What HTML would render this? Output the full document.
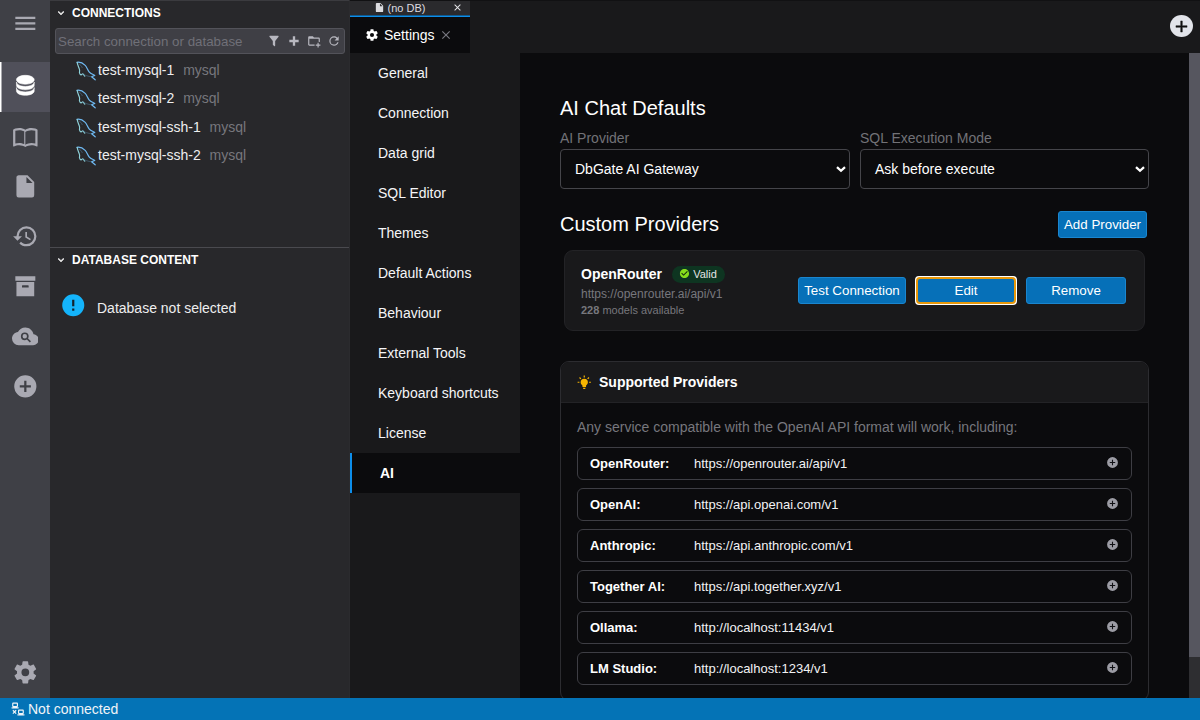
<!DOCTYPE html>
<html lang="en">
<head>
<meta charset="utf-8">
<title>DbGate - Settings</title>
<style>
*{box-sizing:border-box}
html,body{margin:0;padding:0;width:1200px;height:720px;overflow:hidden;background:#0b0b0d}
body{font-family:"Liberation Sans",Arial,sans-serif;font-size:14px;color:#e8e8ea;position:relative}
svg{display:block}
.abs{position:absolute}

/* icon bar */
#iconbar{position:absolute;left:0;top:0;width:50px;height:698px;background:#3f4046}
#iconbar .it{position:absolute;left:0;width:50px;height:50px}
#iconbar .it svg{position:absolute;left:11.67px;top:10.67px;width:26.67px;height:26.67px;fill:#a9a9b2}
#iconbar .it.act{background:linear-gradient(90deg,#fff 0,#fff 1px,#a8a8ad 1px,#a8a8ad 2px,#50505a 2px)}
#iconbar .it.act svg{fill:#fff;stroke:#fff;stroke-width:.5;left:12px;top:10.3px}

/* left panel */
#left{position:absolute;left:50px;top:0;width:300px;height:698px;background:#28282b;box-shadow:inset 0 1px 0 #3b3b3f}
.wtitle{position:absolute;left:0;width:299px;height:24px;font-weight:bold;font-size:12px;color:#fff;line-height:26px}
.wtitle svg{position:absolute;left:5px;top:6.5px;width:12px;height:12px;fill:#f0f0f0;stroke:#f0f0f0;stroke-width:1}
.wtitle span{position:absolute;left:22px;top:0}
#search{position:absolute;left:5px;top:28px;width:290px;height:26px;background:#3f3f45;border:1px solid #53535a;border-radius:3px}
#search .ph{position:absolute;left:2px;top:1px;line-height:24px;font-size:13.33px;color:#707078;white-space:nowrap}
#search svg{position:absolute;top:5px;width:14px;height:14px;fill:#b8b8c0}
.conn{position:absolute;left:0;width:299px;height:28px;line-height:28px;white-space:nowrap}
.conn svg{position:absolute;left:10.5px;top:-0.6px;width:40px;height:30px}
.conn .n{position:absolute;left:48px;color:#eeeeef}
.conn .e{color:#77777d;margin-left:5px}
#split{position:absolute;left:0;top:246.5px;width:299px;height:1px;background:#4a4a4f}

/* status bar */
#status{position:absolute;left:0;top:698px;width:1200px;height:22px;background:#0473b6;color:#f0f4f8;line-height:22px}
#status svg{position:absolute;left:10.5px;top:4px;width:14px;height:14px;fill:#f0f4f8}
#status span{position:absolute;left:28px;top:0}

/* tabs */
#tabbar{position:absolute;left:350px;top:0;width:850px;height:53px;background:#19191b;border-top:1px solid #111113}
#vsplit{position:absolute;left:349px;top:0;width:1px;height:698px;background:#2b2b2e}
#tabgrp{position:absolute;left:0;top:0;width:120px;height:14px;background:#2a2a2d;font-size:11px;line-height:14px;color:#dcdce0}
#tabgrp:after{content:"";position:absolute;left:0;top:14px;width:120px;height:2px;background:linear-gradient(#125a8e 0,#125a8e 1px,#0d8eea 1px)}
#tab{position:absolute;left:0;top:16px;width:120px;height:36px;background:#0b0b0d;line-height:36px;color:#fff}
#newtab{position:absolute;left:820px;top:14px;width:23px;height:22px;border-radius:50%;background:#e2e4ea}

/* settings menu */
#menu{position:absolute;left:350px;top:53px;width:170px;height:645px;background:#19191b}
#menu .mi{position:absolute;left:0;width:170px;height:40px;line-height:40px;padding-left:28px;color:#f5f5f7;white-space:nowrap}
#menu .mi.act{background:#0b0b0d;border-left:2px solid #0d8eea;font-weight:bold;color:#fff}

/* content */
#content{position:absolute;left:520px;top:53px;width:669px;height:645px;background:#0b0b0d;overflow:hidden}
#sbar{position:absolute;left:1189px;top:53px;width:11px;height:645px;background:#2e2e31}
#sbar i{position:absolute;left:0;top:0;width:11px;height:604px;background:#56565f}
h2{position:absolute;margin:0;font-weight:normal;font-size:20px;color:#fff;white-space:nowrap;line-height:24px}
.lbl{position:absolute;color:#727277;white-space:nowrap;line-height:16px}
.sel{position:absolute;height:40px;border:1px solid #45454a;border-radius:4px;background:#0b0b0d;color:#fff;line-height:38px;padding-left:14px;white-space:nowrap}
.sel svg{position:absolute;right:2px;top:13.4px;width:12px;height:12px;fill:none;stroke:#fff;stroke-width:2.3}
#edit{outline:#e8980a auto 1px}
.btn{position:absolute;height:27px;background:#0670b8;border:1px solid #1a86cf;border-radius:3px;color:#fff;font-size:13.33px;line-height:25px;text-align:center;white-space:nowrap}

.card{position:absolute;left:44px;top:197px;width:581px;height:81px;background:#19191b;border:1px solid #232326;border-radius:9px}
.card .t{position:absolute;left:16px;top:15px;font-weight:bold;font-size:14px;line-height:16px;color:#fff}
.card .u{position:absolute;left:16px;top:36px;font-size:12px;line-height:14px;color:#77777d;white-space:nowrap}
.card .m{position:absolute;left:16px;top:53px;font-size:11px;line-height:13px;color:#77777d;white-space:nowrap}
.badge{position:absolute;left:107px;top:15px;width:53px;height:17px;border-radius:9px;background:#0e3521;font-size:11px;line-height:17px;color:#e4e4e6}
.badge svg{position:absolute;left:7px;top:2.3px;width:11px;height:11px;fill:#86dd1c}
.badge span{position:absolute;left:21.2px;top:0}
.sup{position:absolute;left:40px;top:308px;width:589px;height:340px;border:1px solid #2c2c30;border-radius:9px;background:#0b0b0d;overflow:hidden}
.sup .hd{position:absolute;left:0;top:0;width:587px;height:41px;background:#19191b;border-bottom:1px solid #232326;font-weight:bold;font-size:14px;line-height:40px;color:#fff}
.sup .hd svg{position:absolute;left:15.75px;top:12.6px;width:14.5px;height:14.5px;fill:#f7b500}
.sup .hd span{position:absolute;left:38px;top:0;white-space:nowrap}
.sup .ds{position:absolute;left:16px;top:57px;line-height:16px;color:#77777d;white-space:nowrap}
.row{position:absolute;left:16px;width:555px;height:33px;border:1px solid #3e3e44;border-radius:6px;font-size:13px;line-height:31px;color:#f2f2f4;white-space:nowrap}
.row b{position:absolute;left:12px;top:0;color:#fff}
.row span{position:absolute;left:116px;top:0}
.row svg{position:absolute;left:528px;top:8.4px;width:13px;height:13px;fill:#9c9ca4}
</style>
</head>
<body>

<div id="iconbar">
  <div class="it" style="top:0"><svg viewBox="0 0 24 24" style="top:10.2px"><path d="M3,6H21V8H3V6M3,11H21V13H3V11M3,16H21V18H3V16Z"/></svg></div>
  <div class="it act" style="top:62px"><svg viewBox="0 0 24 24"><path d="M12,3C7.58,3 4,4.79 4,7C4,9.21 7.58,11 12,11C16.42,11 20,9.21 20,7C20,4.79 16.42,3 12,3M4,9V12C4,14.21 7.58,16 12,16C16.42,16 20,14.21 20,12V9C20,11.21 16.42,13 12,13C7.58,13 4,11.21 4,9M4,14V17C4,19.21 7.58,21 12,21C16.42,21 20,19.21 20,17V14C20,16.21 16.42,18 12,18C7.58,18 4,16.21 4,14Z"/></svg></div>
  <div class="it" style="top:112px"><svg viewBox="0 0 24 24"><path d="M12 21.5C10.65 20.65 8.2 20 6.5 20C4.85 20 3.15 20.3 1.75 21.05C1.65 21.1 1.6 21.1 1.5 21.1C1.25 21.1 1 20.85 1 20.6V6C1.6 5.55 2.25 5.25 3 5C4.11 4.65 5.33 4.5 6.5 4.5C8.45 4.5 10.55 4.9 12 6C13.45 4.9 15.55 4.5 17.5 4.5C18.67 4.5 19.89 4.65 21 5C21.75 5.25 22.4 5.55 23 6V20.6C23 20.85 22.75 21.1 22.5 21.1C22.4 21.1 22.35 21.1 22.25 21.05C20.85 20.3 19.15 20 17.5 20C15.8 20 13.35 20.65 12 21.5M12 8V19.5C13.35 18.65 15.8 18 17.5 18C18.7 18 19.9 18.15 21 18.5V7C19.9 6.65 18.7 6.5 17.5 6.5C15.8 6.5 13.35 7.15 12 8M11 7.5C9.64 6.9 7.84 6.5 6.5 6.5C5.3 6.5 4.1 6.65 3 7V18.5C4.1 18.15 5.3 18 6.5 18C7.84 18 9.64 18.4 11 19V7.5Z"/></svg></div>
  <div class="it" style="top:162px"><svg viewBox="0 0 24 24"><path d="M13,9V3.5L18.5,9M6,2C4.89,2 4,2.89 4,4V20A2,2 0 0,0 6,22H18A2,2 0 0,0 20,20V8L14,2H6Z"/></svg></div>
  <div class="it" style="top:212px"><svg viewBox="0 0 24 24"><path d="M13.5,8H12V13L16.28,15.54L17,14.33L13.5,12.25V8M13,3A9,9 0 0,0 4,12H1L4.96,16.03L9,12H6A7,7 0 0,1 13,5A7,7 0 0,1 20,12A7,7 0 0,1 13,19C11.07,19 9.32,18.21 8.06,16.94L6.64,18.36C8.27,20 10.5,21 13,21A9,9 0 0,0 22,12A9,9 0 0,0 13,3Z"/></svg></div>
  <div class="it" style="top:262px"><svg viewBox="0 0 24 24"><path d="M3,3H21V7H3V3M4,8H20V21H4V8M9.5,11A0.5,0.5 0 0,0 9,11.5V13H15V11.5A0.5,0.5 0 0,0 14.5,11H9.5Z"/></svg></div>
  <div class="it" style="top:312px"><svg viewBox="0 0 24 24"><path fill-rule="evenodd" d="M19.35,10.03C18.67,6.59 15.64,4 12,4C9.11,4 6.6,5.64 5.35,8.03C2.34,8.36 0,10.9 0,14A6,6 0 0,0 6,20H19A5,5 0 0,0 24,15C24,12.36 21.95,10.22 19.35,10.03Z M11.5,8.5A3.5,3.5 0 0,0 8,12A3.5,3.5 0 0,0 11.5,15.5C12.2,15.5 12.85,15.29 13.4,14.94L16.05,17.55L17.1,16.5L14.47,13.87C14.81,13.33 15,12.69 15,12A3.5,3.5 0 0,0 11.5,8.5Z M11.5,10A2,2 0 0,1 13.5,12A2,2 0 0,1 11.5,14A2,2 0 0,1 9.5,12A2,2 0 0,1 11.5,10Z"/></svg></div>
  <div class="it" style="top:362px"><svg viewBox="0 0 24 24"><path d="M17,13H13V17H11V13H7V11H11V7H13V11H17M12,2A10,10 0 0,0 2,12A10,10 0 0,0 12,22A10,10 0 0,0 22,12A10,10 0 0,0 12,2Z"/></svg></div>
  <div class="it" style="top:648px"><svg viewBox="0 0 24 24"><path d="M12,15.5A3.5,3.5 0 0,1 8.5,12A3.5,3.5 0 0,1 12,8.5A3.5,3.5 0 0,1 15.5,12A3.5,3.5 0 0,1 12,15.5M19.43,12.97C19.47,12.65 19.5,12.33 19.5,12C19.5,11.67 19.47,11.34 19.43,11L21.54,9.37C21.73,9.22 21.78,8.95 21.66,8.73L19.66,5.27C19.54,5.05 19.27,4.96 19.05,5.05L16.56,6.05C16.04,5.66 15.5,5.32 14.87,5.07L14.5,2.42C14.46,2.18 14.25,2 14,2H10C9.75,2 9.54,2.18 9.5,2.42L9.13,5.07C8.5,5.32 7.96,5.66 7.44,6.05L4.95,5.05C4.73,4.96 4.46,5.05 4.34,5.27L2.34,8.73C2.21,8.95 2.27,9.22 2.46,9.37L4.57,11C4.53,11.34 4.5,11.67 4.5,12C4.5,12.33 4.53,12.65 4.57,12.97L2.46,14.63C2.27,14.78 2.21,15.05 2.34,15.27L4.34,18.73C4.46,18.95 4.73,19.03 4.95,18.95L7.44,17.94C7.96,18.34 8.5,18.68 9.13,18.93L9.5,21.58C9.54,21.82 9.75,22 10,22H14C14.25,22 14.46,21.82 14.5,21.58L14.87,18.93C15.5,18.67 16.04,18.34 16.56,17.94L19.05,18.95C19.27,19.03 19.54,18.95 19.66,18.73L21.66,15.27C21.78,15.05 21.73,14.78 21.54,14.63L19.43,12.97Z"/></svg></div>
</div>
<div id="left">
  <div class="wtitle" style="top:0"><svg viewBox="0 0 24 24"><path d="M7.41,8.58L12,13.17L16.59,8.58L18,10L12,16L6,10L7.41,8.58Z"/></svg><span>CONNECTIONS</span></div>
  <div id="search"><span class="ph">Search connection or database</span>
    <svg viewBox="0 0 24 24" style="left:211px"><path d="M14,12V19.88C14.04,20.18 13.94,20.5 13.71,20.71C13.32,21.1 12.69,21.1 12.3,20.71L10.29,18.7C10.06,18.47 9.96,18.16 10,17.87V12H9.97L4.21,4.62C3.87,4.19 3.95,3.56 4.38,3.22C4.57,3.08 4.78,3 5,3V3H19V3C19.22,3 19.43,3.08 19.62,3.22C20.05,3.56 20.13,4.19 19.79,4.62L14.03,12H14Z"/></svg>
    <svg viewBox="0 0 24 24" style="left:231px"><path d="M20 14H14V20H10V14H4V10H10V4H14V10H20V14Z"/></svg>
    <svg viewBox="0 0 24 24" style="left:251px"><path d="M13 19C13 19.34 13.04 19.67 13.09 20H4C2.9 20 2 19.11 2 18V6C2 4.89 2.89 4 4 4H10L12 6H20C21.1 6 22 6.89 22 8V13.81C21.39 13.46 20.72 13.22 20 13.09V8H4V18H13.09C13.04 18.33 13 18.66 13 19M20 18V15H18V18H15V20H18V23H20V20H23V18H20Z"/></svg>
    <svg viewBox="0 0 24 24" style="left:271px"><path d="M17.65,6.35C16.2,4.9 14.21,4 12,4A8,8 0 0,0 4,12A8,8 0 0,0 12,20C15.73,20 18.84,17.45 19.73,14H17.65C16.83,16.33 14.61,18 12,18A6,6 0 0,1 6,12A6,6 0 0,1 12,6C13.66,6 15.14,6.69 16.22,7.78L13,11H20V4L17.65,6.35Z"/></svg>
  </div>
  <div class="conn" style="top:56px"><svg viewBox="0 0 40 30" fill="none" stroke-linecap="round" stroke-linejoin="round"><path d="M16.1,7.3C18,6.9 21.5,7.8 24.2,10.4C26,12.2 26.6,15 28.3,17.1C29.5,18.6 32,19.4 33.75,20.4L30.6,21.7L34.2,24.75" stroke="#6fb9f2" stroke-width="1.2"/><path d="M16.1,7.3C16.3,9 17.6,12 18.5,14.6C19,16 18.2,17 18.5,17.9C18.8,19 19.4,19.8 20,20C20.6,19.4 21.2,18.8 21.8,18.75L23.75,21.25" stroke="#8fd2da" stroke-width="1.15"/><path d="M17.9,8.9C19.4,9.6 20.6,11 21.2,12.6M21.8,18.75C23,20 27,21.6 30.6,21.7" stroke="#5f9cc4" stroke-width=".8" opacity=".5"/></svg><span class="n">test-mysql-1 <span class="e">mysql</span></span></div>
  <div class="conn" style="top:84px"><svg viewBox="0 0 40 30" fill="none" stroke-linecap="round" stroke-linejoin="round"><path d="M16.1,7.3C18,6.9 21.5,7.8 24.2,10.4C26,12.2 26.6,15 28.3,17.1C29.5,18.6 32,19.4 33.75,20.4L30.6,21.7L34.2,24.75" stroke="#6fb9f2" stroke-width="1.2"/><path d="M16.1,7.3C16.3,9 17.6,12 18.5,14.6C19,16 18.2,17 18.5,17.9C18.8,19 19.4,19.8 20,20C20.6,19.4 21.2,18.8 21.8,18.75L23.75,21.25" stroke="#8fd2da" stroke-width="1.15"/><path d="M17.9,8.9C19.4,9.6 20.6,11 21.2,12.6M21.8,18.75C23,20 27,21.6 30.6,21.7" stroke="#5f9cc4" stroke-width=".8" opacity=".5"/></svg><span class="n">test-mysql-2 <span class="e">mysql</span></span></div>
  <div class="conn" style="top:113px"><svg viewBox="0 0 40 30" fill="none" stroke-linecap="round" stroke-linejoin="round"><path d="M16.1,7.3C18,6.9 21.5,7.8 24.2,10.4C26,12.2 26.6,15 28.3,17.1C29.5,18.6 32,19.4 33.75,20.4L30.6,21.7L34.2,24.75" stroke="#6fb9f2" stroke-width="1.2"/><path d="M16.1,7.3C16.3,9 17.6,12 18.5,14.6C19,16 18.2,17 18.5,17.9C18.8,19 19.4,19.8 20,20C20.6,19.4 21.2,18.8 21.8,18.75L23.75,21.25" stroke="#8fd2da" stroke-width="1.15"/><path d="M17.9,8.9C19.4,9.6 20.6,11 21.2,12.6M21.8,18.75C23,20 27,21.6 30.6,21.7" stroke="#5f9cc4" stroke-width=".8" opacity=".5"/></svg><span class="n">test-mysql-ssh-1 <span class="e">mysql</span></span></div>
  <div class="conn" style="top:141px"><svg viewBox="0 0 40 30" fill="none" stroke-linecap="round" stroke-linejoin="round"><path d="M16.1,7.3C18,6.9 21.5,7.8 24.2,10.4C26,12.2 26.6,15 28.3,17.1C29.5,18.6 32,19.4 33.75,20.4L30.6,21.7L34.2,24.75" stroke="#6fb9f2" stroke-width="1.2"/><path d="M16.1,7.3C16.3,9 17.6,12 18.5,14.6C19,16 18.2,17 18.5,17.9C18.8,19 19.4,19.8 20,20C20.6,19.4 21.2,18.8 21.8,18.75L23.75,21.25" stroke="#8fd2da" stroke-width="1.15"/><path d="M17.9,8.9C19.4,9.6 20.6,11 21.2,12.6M21.8,18.75C23,20 27,21.6 30.6,21.7" stroke="#5f9cc4" stroke-width=".8" opacity=".5"/></svg><span class="n">test-mysql-ssh-2 <span class="e">mysql</span></span></div>
  <div id="split"></div>
  <div class="wtitle" style="top:247px"><svg viewBox="0 0 24 24"><path d="M7.41,8.58L12,13.17L16.59,8.58L18,10L12,16L6,10L7.41,8.58Z"/></svg><span>DATABASE CONTENT</span></div>
  <svg viewBox="0 0 24 24" style="position:absolute;left:10px;top:292px;width:26.5px;height:26.5px;fill:#14b4fb"><circle cx="12" cy="12" r="6" fill="#14222c"/><path d="M13,13H11V7H13M13,17H11V15H13M12,2A10,10 0 0,0 2,12A10,10 0 0,0 12,22A10,10 0 0,0 22,12A10,10 0 0,0 12,2Z"/></svg>
  <div style="position:absolute;left:47px;top:299px;line-height:18px;color:#eeeeef;white-space:nowrap">Database not selected</div>
</div>
<div id="vsplit"></div>
<div id="tabbar">
  <div id="tabgrp">
    <svg viewBox="0 0 24 24" style="position:absolute;left:24px;top:1px;width:11px;height:11px;fill:#dcdce0"><path d="M13,9V3.5L18.5,9M6,2C4.89,2 4,2.89 4,4V20A2,2 0 0,0 6,22H18A2,2 0 0,0 20,20V8L14,2H6Z"/></svg>
    <span style="position:absolute;left:37.6px;top:0">(no DB)</span>
    <svg viewBox="0 0 24 24" style="position:absolute;left:102px;top:1px;width:11px;height:11px;fill:#e8e8ec"><path d="M19,6.41L17.59,5L12,10.59L6.41,5L5,6.41L10.59,12L5,17.59L6.41,19L12,13.41L17.59,19L19,17.59L13.41,12L19,6.41Z"/></svg>
  </div>
  <div id="tab">
    <svg viewBox="0 0 24 24" style="position:absolute;left:15px;top:11px;width:14px;height:14px;fill:#fff"><path d="M12,15.5A3.5,3.5 0 0,1 8.5,12A3.5,3.5 0 0,1 12,8.5A3.5,3.5 0 0,1 15.5,12A3.5,3.5 0 0,1 12,15.5M19.43,12.97C19.47,12.65 19.5,12.33 19.5,12C19.5,11.67 19.47,11.34 19.43,11L21.54,9.37C21.73,9.22 21.78,8.95 21.66,8.73L19.66,5.27C19.54,5.05 19.27,4.96 19.05,5.05L16.56,6.05C16.04,5.66 15.5,5.32 14.87,5.07L14.5,2.42C14.46,2.18 14.25,2 14,2H10C9.75,2 9.54,2.18 9.5,2.42L9.13,5.07C8.5,5.32 7.96,5.66 7.44,6.05L4.95,5.05C4.73,4.96 4.46,5.05 4.34,5.27L2.34,8.73C2.21,8.95 2.27,9.22 2.46,9.37L4.57,11C4.53,11.34 4.5,11.67 4.5,12C4.5,12.33 4.53,12.65 4.57,12.97L2.46,14.63C2.27,14.78 2.21,15.05 2.34,15.27L4.34,18.73C4.46,18.95 4.73,19.03 4.95,18.95L7.44,17.94C7.96,18.34 8.5,18.68 9.13,18.93L9.5,21.58C9.54,21.82 9.75,22 10,22H14C14.25,22 14.46,21.82 14.5,21.58L14.87,18.93C15.5,18.67 16.04,18.34 16.56,17.94L19.05,18.95C19.27,19.03 19.54,18.95 19.66,18.73L21.66,15.27C21.78,15.05 21.73,14.78 21.54,14.63L19.43,12.97Z"/></svg>
    <span style="position:absolute;left:34px;top:0">Settings</span>
    <svg viewBox="0 0 24 24" style="position:absolute;left:89px;top:11px;width:14px;height:14px;fill:#787880"><path d="M19,6.41L17.59,5L12,10.59L6.41,5L5,6.41L10.59,12L5,17.59L6.41,19L12,13.41L17.59,19L19,17.59L13.41,12L19,6.41Z"/></svg>
  </div>
  <div id="newtab"><svg viewBox="0 0 24 24" style="position:absolute;left:2px;top:1.5px;width:19px;height:19px;fill:#111;stroke:#111;stroke-width:.6"><path d="M19,13H13V19H11V13H5V11H11V5H13V11H19V13Z"/></svg></div>
</div>
<div id="menu">
  <div class="mi" style="top:0px">General</div>
  <div class="mi" style="top:40px">Connection</div>
  <div class="mi" style="top:80px">Data grid</div>
  <div class="mi" style="top:120px">SQL Editor</div>
  <div class="mi" style="top:160px">Themes</div>
  <div class="mi" style="top:200px">Default Actions</div>
  <div class="mi" style="top:240px">Behaviour</div>
  <div class="mi" style="top:280px">External Tools</div>
  <div class="mi" style="top:320px">Keyboard shortcuts</div>
  <div class="mi" style="top:360px">License</div>
  <div class="mi act" style="top:400px">AI</div>
</div>
<div id="content">
  <h2 style="left:40px;top:43px">AI Chat Defaults</h2>
  <div class="lbl" style="left:40px;top:77px">AI Provider</div>
  <div class="lbl" style="left:340px;top:77px">SQL Execution Mode</div>
  <div class="sel" style="left:40px;top:96px;width:290px">DbGate AI Gateway<svg viewBox="0 0 12 12"><path d="M2,4.2L6,7.8L10,4.2"/></svg></div>
  <div class="sel" style="left:340px;top:96px;width:289px">Ask before execute<svg viewBox="0 0 12 12"><path d="M2,4.2L6,7.8L10,4.2"/></svg></div>
  <h2 style="left:40px;top:159px">Custom Providers</h2>
  <div class="btn" style="left:538px;top:158px;width:89px;height:27px;line-height:25px">Add Provider</div>
  <div class="card">
    <div class="t">OpenRouter</div>
    <div class="badge"><svg viewBox="0 0 24 24"><circle cx="12" cy="12" r="8" fill="#0c1c10"/><path d="M12 2C6.5 2 2 6.5 2 12S6.5 22 12 22 22 17.5 22 12 17.5 2 12 2M10 17L5 12L6.41 10.59L10 14.17L17.59 6.58L19 8L10 17Z"/></svg><span>Valid</span></div>
    <div class="u">https://openrouter.ai/api/v1</div>
    <div class="m"><b>228</b> models available</div>
    <div class="btn" style="left:233px;top:26px;width:108px">Test Connection</div>
    <div class="btn" id="edit" style="left:351px;top:26px;width:100px">Edit</div>
    <div class="btn" style="left:461px;top:26px;width:100px">Remove</div>
  </div>
  <div class="sup">
    <div class="hd"><svg viewBox="0 0 24 24"><path d="M12,6A6,6 0 0,1 18,12C18,14.22 16.79,16.16 15,17.2V19A1,1 0 0,1 14,20H10A1,1 0 0,1 9,19V17.2C7.21,16.16 6,14.22 6,12A6,6 0 0,1 12,6M14,21V22A1,1 0 0,1 13,23H11A1,1 0 0,1 10,22V21H14M20,11H23V13H20V11M1,11H4V13H1V11M13,1V4H11V1H13M4.92,3.5L7.05,5.64L5.63,7.05L3.5,4.93L4.92,3.5M16.95,5.63L19.07,3.5L20.5,4.93L18.37,7.05L16.95,5.63Z"/></svg><span>Supported Providers</span></div>
    <div class="ds">Any service compatible with the OpenAI API format will work, including:</div>
    <div class="row" style="top:85px"><b>OpenRouter:</b><span>https://openrouter.ai/api/v1</span><svg viewBox="0 0 24 24"><circle cx="12" cy="12" r="7" fill="#101014"/><path d="M17,13H13V17H11V13H7V11H11V7H13V11H17M12,2A10,10 0 0,0 2,12A10,10 0 0,0 12,22A10,10 0 0,0 22,12A10,10 0 0,0 12,2Z"/></svg></div>
    <div class="row" style="top:126px"><b>OpenAI:</b><span>https://api.openai.com/v1</span><svg viewBox="0 0 24 24"><circle cx="12" cy="12" r="7" fill="#101014"/><path d="M17,13H13V17H11V13H7V11H11V7H13V11H17M12,2A10,10 0 0,0 2,12A10,10 0 0,0 12,22A10,10 0 0,0 22,12A10,10 0 0,0 12,2Z"/></svg></div>
    <div class="row" style="top:167px"><b>Anthropic:</b><span>https://api.anthropic.com/v1</span><svg viewBox="0 0 24 24"><circle cx="12" cy="12" r="7" fill="#101014"/><path d="M17,13H13V17H11V13H7V11H11V7H13V11H17M12,2A10,10 0 0,0 2,12A10,10 0 0,0 12,22A10,10 0 0,0 22,12A10,10 0 0,0 12,2Z"/></svg></div>
    <div class="row" style="top:208px"><b>Together AI:</b><span>https://api.together.xyz/v1</span><svg viewBox="0 0 24 24"><circle cx="12" cy="12" r="7" fill="#101014"/><path d="M17,13H13V17H11V13H7V11H11V7H13V11H17M12,2A10,10 0 0,0 2,12A10,10 0 0,0 12,22A10,10 0 0,0 22,12A10,10 0 0,0 12,2Z"/></svg></div>
    <div class="row" style="top:249px"><b>Ollama:</b><span>http://localhost:11434/v1</span><svg viewBox="0 0 24 24"><circle cx="12" cy="12" r="7" fill="#101014"/><path d="M17,13H13V17H11V13H7V11H11V7H13V11H17M12,2A10,10 0 0,0 2,12A10,10 0 0,0 12,22A10,10 0 0,0 22,12A10,10 0 0,0 12,2Z"/></svg></div>
    <div class="row" style="top:290px"><b>LM Studio:</b><span>http://localhost:1234/v1</span><svg viewBox="0 0 24 24"><circle cx="12" cy="12" r="7" fill="#101014"/><path d="M17,13H13V17H11V13H7V11H11V7H13V11H17M12,2A10,10 0 0,0 2,12A10,10 0 0,0 12,22A10,10 0 0,0 22,12A10,10 0 0,0 12,2Z"/></svg></div>
  </div>
</div>
<div id="sbar"><i></i></div>
<div id="status"><svg viewBox="0 0 24 24"><path d="M4,1C2.89,1 2,1.89 2,3V7C2,8.11 2.89,9 4,9H1V11H13V9H10C11.11,9 12,8.11 12,7V3C12,1.89 11.11,1 10,1H4M4,3H10V7H4V3M14,13C12.89,13 12,13.89 12,15V19C12,20.11 12.89,21 14,21H11V23H23V21H20C21.11,21 22,20.11 22,19V15C22,13.89 21.11,13 20,13H14M3.88,13.46L2.46,14.88L4.59,17L2.46,19.12L3.88,20.54L6,18.41L8.12,20.54L9.54,19.12L7.41,17L9.54,14.88L8.12,13.46L6,15.59L3.88,13.46M14,15H20V19H14V15Z"/></svg><span>Not connected</span></div>

</body>
</html>
